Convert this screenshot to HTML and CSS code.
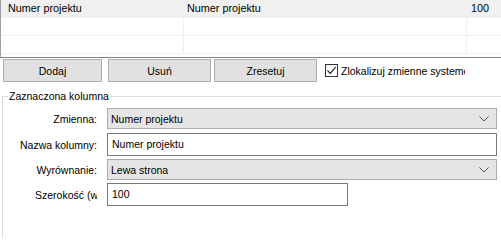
FILE: index.html
```html
<!DOCTYPE html>
<html>
<head>
<meta charset="utf-8">
<link rel="stylesheet" href="styles.css">
</head>
<body>
<div class="grid">
  <div class="row sel"><div class="c1">Numer projektu</div><div class="c2">Numer projektu</div><div class="c3">100</div></div>
  <div class="row"><div class="c1"></div><div class="c2"></div><div class="c3"></div></div>
  <div class="row"><div class="c1"></div><div class="c2"></div><div class="c3"></div></div>
</div>
<div class="buttons">
  <div class="btn b1">Dodaj</div>
  <div class="btn b2">Usuń</div>
  <div class="btn b3">Zresetuj</div>
  <div class="check">
    <span class="box"><svg width="11" height="11" viewBox="0 0 11 11"><path d="M1.5 5.5 L4.3 8.4 L9.6 2.2" fill="none" stroke="#222" stroke-width="1.2"/></svg></span>
    <span class="check-label">Zlokalizuj zmienne systemowe</span>
  </div>
</div>
<fieldset class="group">
  <legend>Zaznaczona kolumna</legend>
  <div class="form">
    <div class="frow r1">
      <div class="lbl">Zmienna:</div>
      <div class="combo"><span>Numer projektu</span><svg class="chev" width="10" height="6" viewBox="0 0 10 6"><path d="M0.5 0.5 L5 5 L9.5 0.5" fill="none" stroke="#555" stroke-width="1"/></svg></div>
    </div>
    <div class="frow r2">
      <div class="lbl">Nazwa kolumny:</div>
      <div class="input">Numer projektu</div>
    </div>
    <div class="frow r3">
      <div class="lbl">Wyrównanie:</div>
      <div class="combo"><span>Lewa strona</span><svg class="chev" width="10" height="6" viewBox="0 0 10 6"><path d="M0.5 0.5 L5 5 L9.5 0.5" fill="none" stroke="#555" stroke-width="1"/></svg></div>
    </div>
    <div class="frow r4">
      <div class="lbl"><span class="clip">Szerokość (w</span></div>
      <div class="input small">100</div>
    </div>
  </div>
</fieldset>
</body>
</html>
```
FILE: styles.css
```css
html, body {
  margin: 0;
  padding: 0;
}
body {
  width: 501px;
  height: 240px;
  overflow: hidden;
  background: #ffffff;
  color: #000000;
  font-family: "Liberation Sans", Arial, sans-serif;
  font-size: 10.5px;
}

/* data grid */
.grid {
  height: 57px;
  border-left: 1px solid #a0a0a0;
  border-bottom: 1px solid #828282;
  font-size: 10.8px;
}
.row {
  display: flex;
  height: 17px;
  line-height: 17px;
  border-bottom: 1px solid #f0f0f0;
  white-space: nowrap;
}
.row.sel {
  background: #f0f0f0;
}
.c1, .c2, .c3 {
  box-sizing: border-box;
  height: 17px;
}
.c1 {
  width: 183px;
  padding-left: 7px;
  border-right: 1px solid #f0f0f0;
}
.c2 {
  width: 283px;
  padding-left: 3px;
  border-right: 1px solid #f0f0f0;
}
.c3 {
  flex: 1;
  padding-left: 4px;
}

/* buttons */
.buttons {
  display: flex;
  align-items: center;
  margin-top: 1px;
  padding-left: 3px;
  height: 23px;
}
.btn {
  box-sizing: border-box;
  height: 23px;
  background: #e1e1e1;
  border: 1px solid #adadad;
  display: flex;
  align-items: center;
  justify-content: center;
}
.b1 { width: 99px; }
.b2 { width: 103px; margin-left: 6px; }
.b3 { width: 103px; margin-left: 3px; }
.check {
  display: flex;
  align-items: center;
  margin-left: 8px;
  width: 140px;
  overflow: hidden;
  white-space: nowrap;
}
.box {
  box-sizing: border-box;
  width: 13px;
  height: 13px;
  border: 1px solid #333333;
  background: #ffffff;
  display: flex;
  align-items: center;
  justify-content: center;
  flex: none;
}
.check-label {
  margin-left: 3px;
}

/* group box */
.group {
  margin: 8px 0 0 2px;
  padding: 0;
  border: 1px solid #dcdcdc;
  border-right: none;
  border-bottom: none;
  width: 499px;
  height: 148px;
  box-sizing: border-box;
  min-width: 0;
}
.group legend {
  margin-left: 5px;
  padding: 0 1px;
  line-height: 13px;
}
.form {
  padding-top: 5px;
  display: flex;
  flex-direction: column;
}
.frow {
  display: flex;
  align-items: center;
}
.r2 { margin-top: 4px; }
.r3 { margin-top: 3px; }
.r4 { margin-top: 3px; }
.lbl {
  width: 94px;
  margin-right: 10px;
  text-align: right;
  white-space: nowrap;
  display: flex;
  justify-content: flex-end;
}
.clip {
  display: block;
  width: 62px;
  overflow: hidden;
  text-align: left;
}
.combo {
  box-sizing: border-box;
  width: 390px;
  height: 21px;
  background: #e5e5e5;
  border: 1px solid #acacac;
  display: flex;
  align-items: center;
  justify-content: space-between;
  padding: 0 7px 0 3px;
}
.chev {
  display: block;
  margin-top: 1px;
}
.input {
  box-sizing: border-box;
  width: 390px;
  height: 23px;
  background: #ffffff;
  border: 1px solid #7a7a7a;
  display: flex;
  align-items: center;
  padding-left: 4px;
  padding-bottom: 2px;
}
.input.small {
  width: 241px;
}
```
